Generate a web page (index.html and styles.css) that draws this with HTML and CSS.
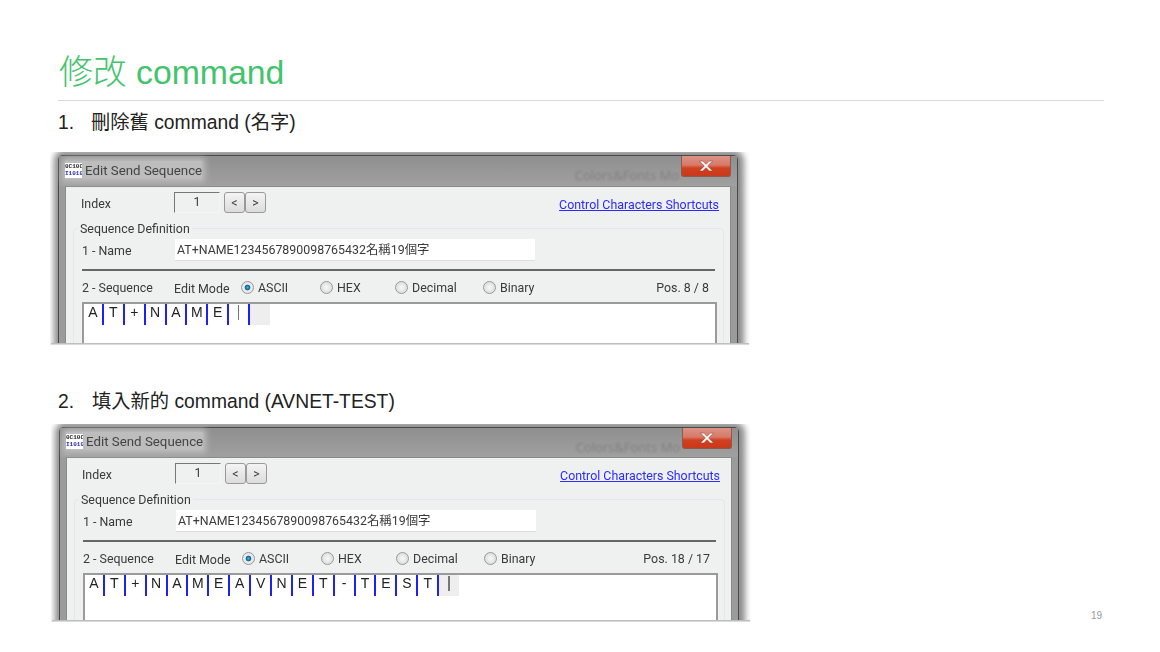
FILE: index.html
```html
<!DOCTYPE html>
<html lang="zh-Hant">
<head>
<meta charset="utf-8">
<title>修改 command</title>
<link rel="stylesheet" href="styles.css">
</head>
<body>
<main class="slide">
  <h1 class="title">修改 command</h1>
  <p class="item item-one"><span class="marker">1.</span><span>刪除舊 command (名字)</span></p>
  <div class="shot-row">
    <div class="shot shot-one">
      <div class="frame">
        <div class="titlebar">
          <div class="caption"><span class="icon"><span>0C10C</span><span class="icon-blue">I1010</span></span><span>Edit Send Sequence</span></div>
          <span class="ghost">Colors&amp;Fonts Mo</span>
          <span class="close"><svg width="18" height="12" viewBox="0 0 16 11"><path d="M2 1h3l3 3 3-3h3l-4.500 4.500 4.500 4.500h-3l-3-3-3 3h-3l4.500-4.500z" fill="#fff" stroke="#8a3a30" stroke-width=".5"/></svg></span>
        </div>
        <div class="panel">
          <div class="index-row">
            <span class="label">Index</span>
            <span class="index-box">1</span>
            <span class="stepper"><span class="step">&lt;</span><span class="step">&gt;</span></span>
            <a class="link">Control Characters Shortcuts</a>
          </div>
          <div class="group">
            <div class="legend">Sequence Definition</div>
            <div class="name-row">
              <span class="label">1 - Name</span>
              <span class="name-input">AT+NAME1234567890098765432名稱19個字</span>
            </div>
            <div class="divider"></div>
            <div class="mode-row">
              <span class="label">2 - Sequence</span>
              <span class="mode-label">Edit Mode</span>
              <span class="opt opt-ascii"><i class="radio radio-on"></i>ASCII</span>
              <span class="opt opt-hex"><i class="radio"></i>HEX</span>
              <span class="opt opt-dec"><i class="radio"></i>Decimal</span>
              <span class="opt"><i class="radio"></i>Binary</span>
              <span class="pos">Pos. 8 / 8</span>
            </div>
            <div class="seq-box">
              <span class="cell">A</span><span class="cell">T</span><span class="cell">+</span><span class="cell">N</span><span class="cell">A</span><span class="cell">M</span><span class="cell">E</span><span class="cell caret"><i></i></span><span class="cell cell-end"></span>
            </div>
          </div>
        </div>
      </div>
    </div>
  </div>
  <p class="item item-two"><span class="marker">2.</span><span>填入新的 command (AVNET-TEST)</span></p>
  <div class="shot-row">
    <div class="shot shot-two">
      <div class="frame">
        <div class="titlebar">
          <div class="caption"><span class="icon"><span>0C10C</span><span class="icon-blue">I1010</span></span><span>Edit Send Sequence</span></div>
          <span class="ghost">Colors&amp;Fonts Mo</span>
          <span class="close"><svg width="18" height="12" viewBox="0 0 16 11"><path d="M2 1h3l3 3 3-3h3l-4.500 4.500 4.500 4.500h-3l-3-3-3 3h-3l4.500-4.500z" fill="#fff" stroke="#8a3a30" stroke-width=".5"/></svg></span>
        </div>
        <div class="panel">
          <div class="index-row">
            <span class="label">Index</span>
            <span class="index-box">1</span>
            <span class="stepper"><span class="step">&lt;</span><span class="step">&gt;</span></span>
            <a class="link">Control Characters Shortcuts</a>
          </div>
          <div class="group">
            <div class="legend">Sequence Definition</div>
            <div class="name-row">
              <span class="label">1 - Name</span>
              <span class="name-input">AT+NAME1234567890098765432名稱19個字</span>
            </div>
            <div class="divider"></div>
            <div class="mode-row">
              <span class="label">2 - Sequence</span>
              <span class="mode-label">Edit Mode</span>
              <span class="opt opt-ascii"><i class="radio radio-on"></i>ASCII</span>
              <span class="opt opt-hex"><i class="radio"></i>HEX</span>
              <span class="opt opt-dec"><i class="radio"></i>Decimal</span>
              <span class="opt"><i class="radio"></i>Binary</span>
              <span class="pos">Pos. 18 / 17</span>
            </div>
            <div class="seq-box">
              <span class="cell">A</span><span class="cell">T</span><span class="cell">+</span><span class="cell">N</span><span class="cell">A</span><span class="cell">M</span><span class="cell">E</span><span class="cell">A</span><span class="cell">V</span><span class="cell">N</span><span class="cell">E</span><span class="cell">T</span><span class="cell">-</span><span class="cell">T</span><span class="cell">E</span><span class="cell">S</span><span class="cell">T</span><span class="cell cell-end caret"><i></i></span>
            </div>
          </div>
        </div>
      </div>
    </div>
    <span class="page-num">19</span>
  </div>
</main>
</body>
</html>
```

FILE: styles.css
```css
* { box-sizing: border-box; }
html, body { margin: 0; padding: 0; background: #fff; }
.slide {
  width: 1160px;
  height: 652px;
  overflow: hidden;
  padding: 50px 56px 0 50px;
  font-family: "Liberation Sans", "Noto Sans CJK TC", sans-serif;
  background: #fff;
}
.title {
  margin: 0 0 0 8px;
  height: 51px;
  padding-left: 1px;
  font-size: 33.8px;
  line-height: 44px;
  font-weight: 300;
  color: #42c46c;
  border-bottom: 1px solid #d9d9d9;
}
.item {
  display: flex;
  margin: 0 0 0 8px;
  height: 22px;
  font-size: 19.3px;
  line-height: 22px;
  color: #222;
}
.item-one { margin-top: 11px; }
.item-two { margin-top: 46px; }
.marker { width: 33px; }
.item-two .marker { width: 34px; }

.shot-row { display: flex; align-items: flex-end; }
.item-one + .shot-row { margin-top: 18px; }
.item-two + .shot-row { margin-top: 11px; }
.shot {
  position: relative;
  flex: none;
  width: 700px;
  overflow: hidden;
  padding: 3px 12px 0 8px;
  filter: blur(.45px);
  background: #fff;
}
.shot::after {
  content: "";
  position: absolute;
  left: 1px;
  right: 1px;
  bottom: 0;
  height: 2px;
  background: linear-gradient(#b0b0b0, #e8e8e8);
}
.shot-one { height: 193px; }
.shot-two { height: 198px; margin-left: 1px; }
.frame {
  height: 300px;
  background: #9b9b9b;
  border: 1px solid #4a4a4a;
  border-bottom: 0;
  border-radius: 5px 5px 0 0;
  box-shadow: 1px 0 6px 5px #8c8c8c;
}
.titlebar {
  display: flex;
  align-items: flex-start;
  height: 30px;
  background: linear-gradient(#8f8f8f, #a0a0a0);
}
.shot-two .titlebar { height: 29px; }
.caption {
  display: flex;
  align-items: center;
  gap: 3px;
  height: 18px;
  margin: 5px 0 0 6px;
  font-family: Roboto, "Open Sans", sans-serif;
  font-size: 13.3px;
  color: #444;
  background: #bdbdbd;
  box-shadow: 0 0 6px 3px #bdbdbd;
}
.shot-two .caption { margin-top: 4px; }
.icon {
  display: flex;
  flex-direction: column;
  width: 17px;
  height: 15px;
  overflow: hidden;
  background: #fff;
  font-family: "Liberation Mono", monospace;
  font-size: 6px;
  font-weight: 700;
  line-height: 7px;
  color: #222;
}
.icon-blue { color: #2a2ac0; }
.ghost {
  margin: 10px 2px 0 auto;
  font-family: "Open Sans", sans-serif;
  font-size: 13px;
  color: #808080;
  filter: blur(1.2px);
}
.close {
  display: flex;
  align-items: center;
  justify-content: center;
  width: 50px;
  height: 21px;
  margin-right: 6px;
  background: linear-gradient(#db9386 0, #d67a68 45%, #d2401e 60%, #c83a1c 100%);
  border: 1px solid #8d5a50;
  border-top: 0;
  border-radius: 0 0 3px 3px;
}
.panel {
  height: 270px;
  margin: 0 6px;
  padding: 5px 0 0 15px;
  background: #eff0f0;
  border: 1px solid #8a8a8a;
  font-family: Roboto, "Noto Sans CJK TC", sans-serif;
  font-size: 12.4px;
  color: #3a3a3a;
}
.index-row {
  display: flex;
  align-items: center;
  height: 21px;
}
.label { flex: none; width: 93px; }
.index-row .label { padding-top: 2px; }
.mode-row .label { width: 92px; }
.index-box {
  width: 46px;
  height: 21px;
  line-height: 17px;
  text-align: center;
  background: #eff0f0;
  border: 1px solid #f5f5f5;
  border-top-color: #777;
  border-left-color: #777;
}
.stepper { display: flex; margin-left: 4px; }
.step {
  width: 21px;
  height: 21px;
  line-height: 19px;
  text-align: center;
  background: linear-gradient(#f4f4f4, #dcdcdc);
  border: 1px solid #999;
  border-radius: 3px;
}
.link {
  margin: 3px 11px 0 auto;
  color: #2b2bff;
  text-decoration: underline;
}
.group {
  margin: 15px 6px 0 -8px;
  padding-left: 8px;
  border: 1px solid #e4e7ec;
  border-radius: 4px;
  height: 200px;
}
.legend {
  width: fit-content;
  height: 17px;
  margin: -9px 0 0 -4px;
  padding: 0 2px;
  line-height: 17px;
  background: #eff0f0;
}
.name-row {
  display: flex;
  align-items: center;
  margin-top: 2px;
  height: 22px;
}
.name-input {
  width: 360px;
  height: 22px;
  padding-left: 2px;
  line-height: 21px;
  background: #fff;
  border-bottom: 1px solid #ddd;
  white-space: nowrap;
}
.divider {
  height: 2px;
  margin: 8px 8px 0 0;
  background: #666;
}
.mode-row {
  display: flex;
  align-items: center;
  height: 20px;
  margin-top: 6px;
}
.mode-label { width: 67px; padding-top: 2px; }
.opt { display: flex; align-items: center; gap: 4px; }
.opt-ascii { width: 79px; }
.opt-hex { width: 75px; }
.opt-dec { width: 88px; }
.radio {
  flex: none;
  width: 13px;
  height: 13px;
  border-radius: 50%;
  border: 1px solid #999;
  background: radial-gradient(#f8f8f8, #d4d4d4);
}
.radio-on {
  background: radial-gradient(#4ab0e0 0, #0d6a9a 30%, #0d6a9a 32%, #f0f0f0 42%, #d8d8d8 100%);
}
.pos { margin: 0 14px 0 auto; }
.seq-box {
  display: flex;
  height: 60px;
  margin: 5px 6px 0 0;
  background: #fff;
  border: 2px solid #9a9a9a;
  border-bottom: 0;
  font-family: "Liberation Sans", sans-serif;
  font-size: 14px;
  color: #222;
}
.cell {
  position: relative;
  flex: none;
  width: 20.9px;
  height: 21px;
  line-height: 17px;
  text-align: center;
  border-right: 2px solid #2020f0;
  background: #fff;
}
.cell:first-child { width: 19.9px; }
.cell-end { border-right: 0; width: 20px; background: #eeeeee; }
.caret i {
  display: block;
  width: 1.5px;
  height: 15px;
  margin: 1px auto 0;
  background: #777;
}
.page-num {
  margin: 0 2px 0 auto;
  font-size: 10px;
  line-height: 12px;
  color: #999;
}
```
